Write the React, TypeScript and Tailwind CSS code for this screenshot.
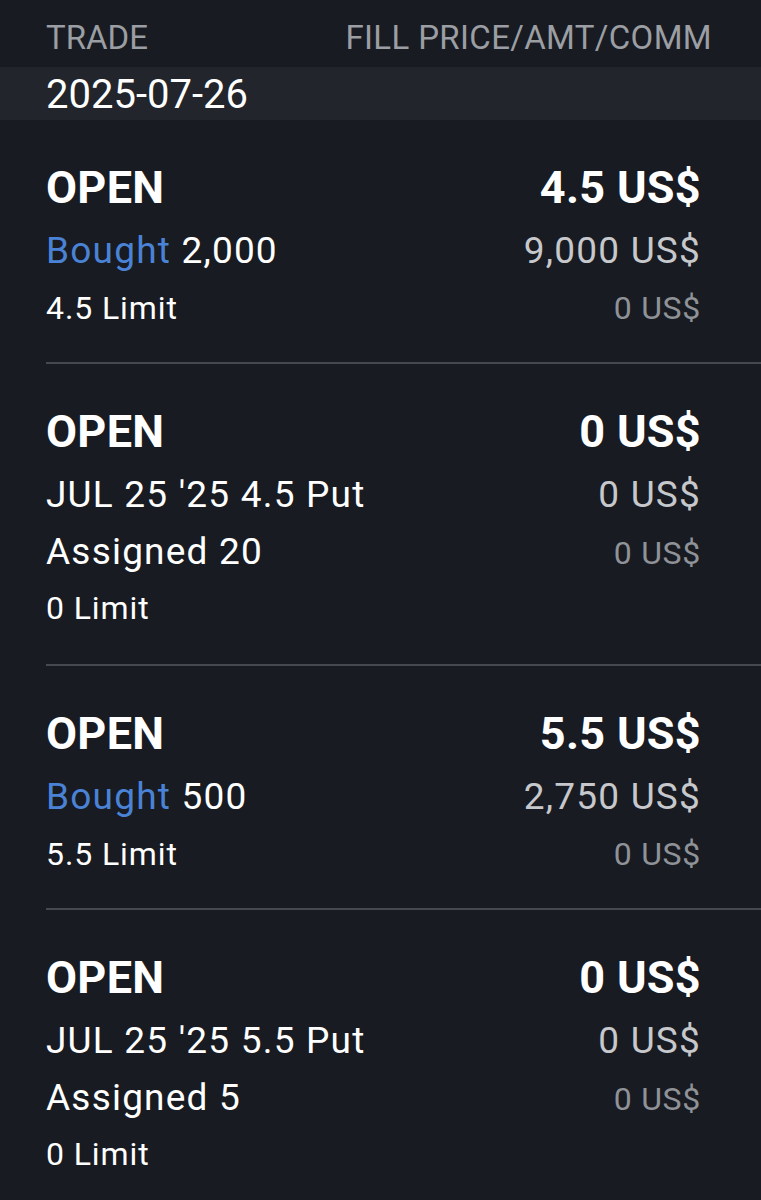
import React from 'react';

interface Trade {
    price: string;
    amount: string;
    comm: string;
    contract?: string;
    action: string;
    qty: string;
    limit: string;
}

const trades: Trade[] = [
    { price: '4.5 US$', amount: '9,000 US$', comm: '0 US$', action: 'Bought', qty: '2,000', limit: '4.5 Limit' },
    { price: '0 US$', amount: '0 US$', comm: '0 US$', contract: "JUL 25 '25 4.5 Put", action: 'Assigned', qty: '20', limit: '0 Limit' },
    { price: '5.5 US$', amount: '2,750 US$', comm: '0 US$', action: 'Bought', qty: '500', limit: '5.5 Limit' },
    { price: '0 US$', amount: '0 US$', comm: '0 US$', contract: "JUL 25 '25 5.5 Put", action: 'Assigned', qty: '5', limit: '0 Limit' },
];

const TradeRow = ({ trade, last }: { trade: Trade; last: boolean }) => {
    const bought = trade.action === 'Bought';
    return (
        <div className={`ml-[46px] pr-[60px] pt-[36px] ${trade.contract ? 'pb-[26px]' : 'pb-[28px]'} ${last ? '' : 'border-b-2 border-[#46494f]'}`}>
            {/* first line: status and fill price */}
            <div className="flex justify-between h-[64px] leading-[64px] text-[45px] font-bold text-white tracking-[0.3px]">
                <span>OPEN</span>
                <span>{trade.price}</span>
            </div>
            <div className="flex justify-between h-[62px] leading-[62px] text-[37px] tracking-[1.2px]">
                {trade.contract ? (
                    <span className="text-white">{trade.contract}</span>
                ) : (
                    <span>
                        <span className="text-[#4a83d6]">Bought</span>
                        <span className="text-white"> {trade.qty}</span>
                    </span>
                )}
                <span className="text-[#c6c8cc]">{trade.amount}</span>
            </div>
            <div className="flex justify-between items-baseline h-[52px] leading-[52px]">
                {bought ? (
                    <span className="text-[32px] tracking-[0.9px] text-white">{trade.limit}</span>
                ) : (
                    <span className="text-[37px] tracking-[1.2px] text-white">{trade.action} {trade.qty}</span>
                )}
                <span className="text-[32px] tracking-[0.7px] text-[#8f9297]">{trade.comm}</span>
            </div>
            {!bought && (
                <div className="h-[60px] leading-[60px] text-[32px] tracking-[0.9px] text-white">{trade.limit}</div>
            )}
        </div>
    );
};

export default function App() {
    return (
        <div className="w-[761px] h-[1200px] overflow-hidden bg-[#181b22]" style={{ fontFamily: 'Roboto, "Noto Sans", sans-serif' }}>
            <div className="flex justify-between h-[67px] pt-[14px] pl-[46px] pr-[49px] text-[33px] leading-[48px] text-[#9b9ea3]">
                <span>TRADE</span>
                <span className="tracking-[0.35px]">FILL PRICE/AMT/COMM</span>
            </div>
            <div className="h-[53px] pt-[2px] pl-[46px] bg-[#22252b] text-[40px] leading-[51px] text-white">
                2025-07-26
            </div>
            {trades.map((t, i) => (
                <TradeRow key={i} trade={t} last={i === trades.length - 1} />
            ))}
        </div>
    );
}
